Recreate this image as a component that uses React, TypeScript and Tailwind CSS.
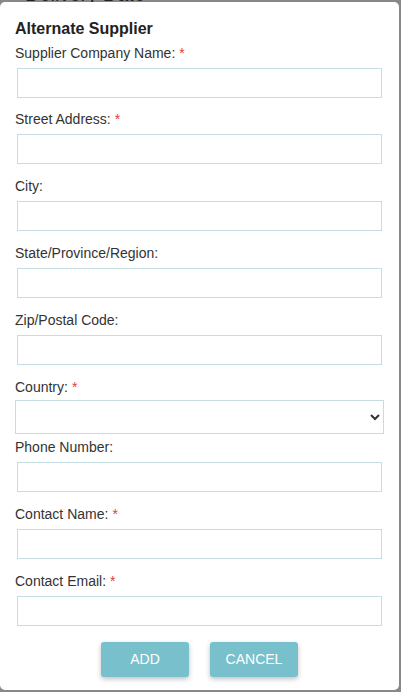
const fields: { label: string; required?: boolean; select?: boolean }[] = [
  { label: 'Supplier Company Name:', required: true },
  { label: 'Street Address:', required: true },
  { label: 'City:' },
  { label: 'State/Province/Region:' },
  { label: 'Zip/Postal Code:' },
  { label: 'Country:', required: true, select: true },
  { label: 'Phone Number:' },
  { label: 'Contact Name:', required: true },
  { label: 'Contact Email:', required: true },
]

const Field = ({
  label,
  required,
  select,
  first,
}: {
  label: string
  required?: boolean
  select?: boolean
  first?: boolean
}) => {
  const spacing = select ? 'mb-[5px]' : first ? 'mb-[13px]' : 'mb-[14px]'
  return (
    <div className={`${spacing} flex flex-col`}>
      <label className="h-[17px] text-[14px] leading-[17px] text-[#333]">
        {label}
        {required && <span className="ml-[4px] text-[#e53b3b]">*</span>}
      </label>
      {select ? (
        <select className="mt-[4px] h-[34px] w-full border border-[#c6dde2] bg-white text-[14px] text-[#333]">
          <option value=""></option>
        </select>
      ) : (
        <input
          type="text"
          className="mx-[2px] mt-[6px] h-[30px] border border-[#c6dde2] bg-white px-2 text-[14px] text-[#333] outline-none"
        />
      )}
    </div>
  )
}

export default function App() {
  return (
    <div className="relative h-[692px] w-[401px] overflow-hidden bg-[#888] font-['Liberation_Sans',Arial,sans-serif]">
      <div className="-mt-[15px] pl-[25px] text-[20px] leading-[18px] text-[#222]">Delivery Date</div>
      <div className="mt-[676px] flex items-center gap-3 pl-[50px] text-[12px] leading-[14px] text-[#222]">
        <span>·</span>
        <span>____ ____ _ _ _ ____</span>
      </div>

      <div className="absolute left-0 top-[2px] flex h-[688px] w-[399px] flex-col rounded-[5px] bg-white px-[15px] pt-[17px]">
        <h2 className="mb-[7px] text-[16px] font-bold leading-[19px] text-[#222]">Alternate Supplier</h2>
        {fields.map((f, i) => (
          <Field key={f.label} {...f} first={i === 0} />
        ))}
        <div className="mt-[2px] flex justify-center gap-[21px]">
          <button
            type="button"
            className="h-[35px] w-[88px] rounded-[3px] bg-[#78c0cc] text-[14px] text-white shadow-[0_2px_5px_rgba(0,0,0,0.25)]"
          >
            ADD
          </button>
          <button
            type="button"
            className="h-[35px] w-[88px] rounded-[3px] bg-[#78c0cc] text-[14px] text-white shadow-[0_2px_5px_rgba(0,0,0,0.25)]"
          >
            CANCEL
          </button>
        </div>
      </div>
    </div>
  )
}
